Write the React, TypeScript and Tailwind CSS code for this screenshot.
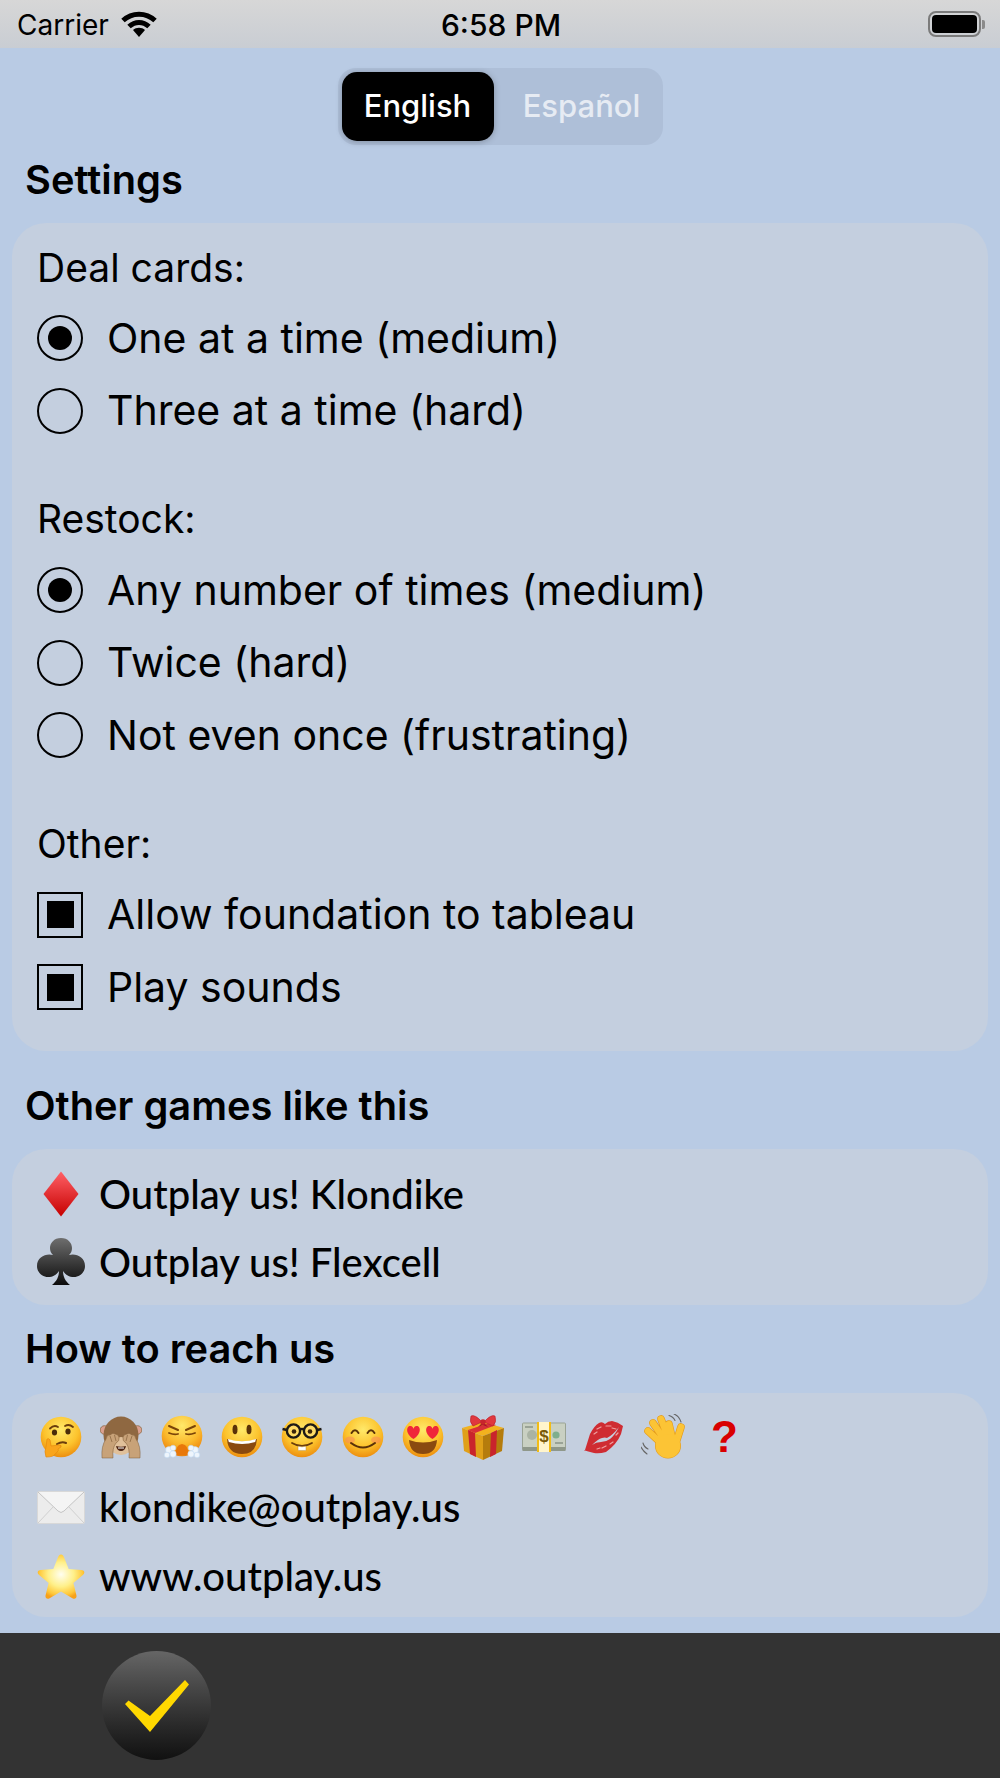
import React from "react";

const sf = "font-['Inter',sans-serif]";

function Face({ id, children }: { id: string; children?: React.ReactNode }) {
  return (
    <svg width="42" height="42" viewBox="0 0 42 42">
      <defs>
        <radialGradient id={id} cx="50%" cy="32%" r="70%">
          <stop offset="0%" stopColor="#ffe96a" />
          <stop offset="60%" stopColor="#fcc32d" />
          <stop offset="100%" stopColor="#ec8a0c" />
        </radialGradient>
      </defs>
      <circle cx="21" cy="21" r="20.3" fill={`url(#${id})`} />
      {children}
    </svg>
  );
}

const Thinking = () => (
  <Face id="f1">
    <path d="M10 12.5q4-4 8-1.5M25 10q4-2.500 8 1" stroke="#6b3d0c" strokeWidth="1.800" fill="none" strokeLinecap="round" />
    <ellipse cx="14.500" cy="16.500" rx="2.600" ry="3" fill="#4a2c0a" />
    <ellipse cx="28" cy="15.500" rx="2.600" ry="3" fill="#4a2c0a" />
    <path d="M17 28q5-3 9-1" stroke="#6b3d0c" strokeWidth="2" fill="none" strokeLinecap="round" />
    <path d="M6 41q-2-6 0-10l1-8q2-1 3 1l1 6 8-1q3 0 2 2l-3 2q1 2-1 3-1 2-2 2-1 3-9 3z" fill="#f9a51c" stroke="#e58a0f" strokeWidth=".7" />
  </Face>
);

const Monkey = () => (
  <svg width="42" height="44" viewBox="0 0 42 44">
    <circle cx="4.500" cy="15" r="4.300" fill="#dba08f" stroke="#8e6a44" strokeWidth=".8" />
    <circle cx="37.500" cy="15" r="4.300" fill="#dba08f" stroke="#8e6a44" strokeWidth=".8" />
    <ellipse cx="21" cy="20" rx="17.500" ry="18.500" fill="#8f6841" />
    <ellipse cx="21" cy="31" rx="11.500" ry="9" fill="#e0c09a" />
    <path d="M16 31q5 1.500 10 0-1 5-5 5t-5-5z" fill="#4c2414" />
    <path d="M18 32.500h6v1h-6z" fill="#fff" />
    <path d="M2 43q-1-12 4-19 1-5 4-4 3-3 5-1 3 0 4 3 1 4-3 6-4 5-3 15z" fill="#c8a278" stroke="#7d5a36" strokeWidth=".5" />
    <path d="M40 43q1-12-4-19-1-5-4-4-3-3-5-1-3 0-4 3-1 4 3 6 4 5 3 15z" fill="#c8a278" stroke="#7d5a36" strokeWidth=".5" />
    <path d="M10 21l2 6M14.500 20l1.500 6M32 21l-2 6M27.500 20l-1.500 6" stroke="#8e6a44" strokeWidth=".8" />
  </svg>
);

const Huff = () => (
  <svg width="42" height="44" viewBox="0 0 42 44">
    <defs>
      <radialGradient id="f3" cx="50%" cy="25%" r="75%">
        <stop offset="0%" stopColor="#ffe96a" />
        <stop offset="60%" stopColor="#fbb92c" />
        <stop offset="100%" stopColor="#ea7f0c" />
      </radialGradient>
    </defs>
    <circle cx="21" cy="21" r="20.300" fill="url(#f3)" />
    <path d="M8 11l9 4M34 11l-9 4" stroke="#7a4408" strokeWidth="2" strokeLinecap="round" />
    <path d="M8 18q5 2 9 1M34 18q-5 2-9 1" stroke="#7a4408" strokeWidth="1.800" fill="none" strokeLinecap="round" />
    <path d="M15 40q-1-10 6-11 7 1 6 11z" fill="#e8780a" />
    <g fill="#eef5fc" stroke="#b8d4f0" strokeWidth=".5">
      <circle cx="8" cy="35" r="3.400" /><circle cx="12" cy="33" r="2.800" /><circle cx="12" cy="39" r="3.200" /><circle cx="6" cy="40" r="2.800" />
      <circle cx="34" cy="35" r="3.400" /><circle cx="30" cy="33" r="2.800" /><circle cx="30" cy="39" r="3.200" /><circle cx="36" cy="40" r="2.800" />
    </g>
  </svg>
);

const Smiley = () => (
  <Face id="f4">
    <ellipse cx="14" cy="13.500" rx="2.500" ry="4.800" fill="#5a3208" />
    <ellipse cx="28" cy="13.500" rx="2.500" ry="4.800" fill="#5a3208" />
    <path d="M6 23q15 5 30 0-1 15-15 15T6 23z" fill="#8a4a10" />
    <path d="M7 23q14 4.500 28 0l-.8 3q-13 4-26.400 0z" fill="#fff" />
  </Face>
);

const Nerd = () => (
  <Face id="f5">
    <circle cx="12.500" cy="15" r="6.600" fill="#ffdc66" stroke="#1d1a16" strokeWidth="2.400" />
    <circle cx="29.500" cy="15" r="6.600" fill="#ffdc66" stroke="#1d1a16" strokeWidth="2.400" />
    <path d="M1.500 13l4.500 1M18.500 13.500q2.500-1 5 0M36 14l4.500-1" stroke="#1d1a16" strokeWidth="2.400" />
    <circle cx="13" cy="15.500" r="2.300" fill="#3a250c" />
    <circle cx="29" cy="15.500" r="2.300" fill="#3a250c" />
    <path d="M11 27q10 6 20 0" stroke="#6b3d0c" strokeWidth="1.800" fill="none" strokeLinecap="round" />
    <path d="M17 30.200l4 .6 4-.6v4q-1 1-2 0-1 1-2 0-1 1-2 0-1 1-2 0z" fill="#fff" stroke="#b58a3a" strokeWidth=".5" />
  </Face>
);

const Blush = () => (
  <Face id="f6">
    <ellipse cx="8" cy="24" rx="5" ry="3.500" fill="#f8885a" opacity=".55" />
    <ellipse cx="34" cy="24" rx="5" ry="3.500" fill="#f8885a" opacity=".55" />
    <path d="M9.500 17q3.500-5.500 7 0M25.500 17q3.500-5.500 7 0" stroke="#5a3208" strokeWidth="2" fill="none" strokeLinecap="round" />
    <path d="M9 27q12 9 24 0" stroke="#5a3208" strokeWidth="2" fill="none" strokeLinecap="round" />
  </Face>
);

const Heart = ({ x, y }: { x: number; y: number }) => (
  <path transform={`translate(${x} ${y})`} d="M0 9C-9 3-7-5-2.500-4-1-3.800 0-2 0-1 0-2 1-3.800 2.500-4 7-5 9 3 0 9z" fill="#f0263a" />
);

const HeartEyes = () => (
  <Face id="f7">
    <path d="M7 24q14 5 28 0-1 14-14 14T7 24z" fill="#8a4a10" />
    <Heart x={11.500} y={14} />
    <Heart x={30.500} y={14} />
  </Face>
);

const Gift = () => (
  <svg width="44" height="46" viewBox="0 0 44 46">
    <path d="M1 14L22 8l21 6-21 8z" fill="#f2b21e" />
    <path d="M1 14l21 8v24L3 37z" fill="#e0a018" />
    <path d="M43 14l-21 8v24l19-9z" fill="#b57c0c" />
    <path d="M7 16l7 3 1 24-6-3zM30 19l6-3-1 24-6 3z" fill="#c9242c" />
    <path d="M7 16L28 9l7 2-21 8z" fill="#d83038" />
    <path d="M21 8Q14 0 10 2 8 8 12 12zM23 8Q30 0 34 2 36 8 32 12z" fill="#e0383e" stroke="#b81f28" strokeWidth=".6" />
    <path d="M21 9l-4 4 5-2 5 2-4-4z" fill="#a01a22" />
    <circle cx="22" cy="8" r="2.800" fill="#c8242c" />
  </svg>
);

const Money = () => (
  <svg width="44" height="30" viewBox="0 0 44 30">
    <rect x="0.500" y="1" width="43" height="27" rx="1" fill="#c9d0c2" stroke="#9aa394" />
    <rect x="0.500" y="25" width="43" height="4" fill="#8f988a" />
    <circle cx="10" cy="13" r="5" fill="#aab3a4" />
    <circle cx="34" cy="13" r="3.600" fill="#7fae8d" />
    <rect x="3" y="4" width="8" height="2" fill="#9aa396" />
    <rect x="33" y="20" width="8" height="2" fill="#9aa396" />
    <rect x="15" y="0" width="14" height="30" fill="#fff5cc" />
    <rect x="15" y="0" width="2" height="30" fill="#f2bc16" />
    <rect x="27" y="0" width="2" height="30" fill="#f2bc16" />
    <text x="22" y="20" textAnchor="middle" fontSize="17" fontWeight="700" fill="#7a5a08" fontFamily="'Liberation Sans',sans-serif">$</text>
  </svg>
);

const Kiss = () => (
  <svg width="40" height="34" viewBox="0 0 40 34">
    <path d="M1 30L6 14Q10 6 15 3q3-2 6 1 3-3 7-3 6 1 11 5l-2 8q-4 10-15 18-7 2-12 1-5-1-11-3z" fill="#cf2c32" />
    <path d="M8 25q6-6 10-7 3-1 5 0 6-3 12-11-4 8-9 12-4 3-9 3-5 0-9 3z" fill="#c4cfdf" />
    <path d="M13 9l4-2M22 6l5 0M18 28l4-2M10 14l3-2M28 8l4 1M26 24l3-2M13 29l3-1M32 15l2-2" stroke="#f0a0a0" strokeWidth="1.200" strokeLinecap="round" />
  </svg>
);

const Wave = () => (
  <svg width="46" height="46" viewBox="0 0 46 46">
    <path d="M28 1.500q4 1 6 5M33 0q5 2 7 8M2 29q1 4 5 6M0 33q2 4 6 7" stroke="#666" strokeWidth="1.100" fill="none" strokeLinecap="round" />
    <g stroke="#e39a1c" strokeLinecap="round" fill="none" strokeWidth="7.600">
      <path d="M21 30L7 17M23 25L12 9M27 23L20 5M31 23L28 10M34 32L40 13" />
    </g>
    <ellipse cx="27" cy="32" rx="13" ry="12.500" fill="#e39a1c" />
    <g stroke="#fcc435" strokeLinecap="round" fill="none" strokeWidth="6.400">
      <path d="M21 30L7 17M23 25L12 9M27 23L20 5M31 23L28 10M34 32L40 13" />
    </g>
    <ellipse cx="27" cy="32" rx="12.400" ry="12" fill="#fcc435" />
  </svg>
);

const Radio = ({ on }: { on?: boolean }) => (
  <span className="flex h-[46px] w-[46px] shrink-0 items-center justify-center rounded-full border-[2px] border-black">
    {on && <span className="h-[24px] w-[24px] rounded-full bg-black" />}
  </span>
);

const Check = () => (
  <span className="flex h-[46px] w-[46px] shrink-0 items-center justify-center border-[2px] border-black">
    <span className="h-[27px] w-[27px] bg-black" />
  </span>
);

const Row = ({ icon, children }: { icon: React.ReactNode; children: React.ReactNode }) => (
  <div className="flex h-[72.5px] items-center gap-[24px] text-[41px] text-black">
    {icon}
    <span>{children}</span>
  </div>
);

const Label = ({ children, className }: { children: React.ReactNode; className?: string }) => (
  <div className={`flex h-[46px] items-center text-[39px] text-black ${className ?? ""}`}>{children}</div>
);

const Heading = ({ children, className }: { children: React.ReactNode; className?: string }) => (
  <h2 className={`flex h-[44px] items-center pl-[25px] text-[39.8px] font-semibold text-black ${className ?? ""}`}>{children}</h2>
);

const LinkRow = ({ icon, h, children }: { icon: React.ReactNode; h: string; children: React.ReactNode }) => (
  <div className={`flex ${h} items-center text-black`}>
    <span className="flex w-[60px] shrink-0 justify-center">{icon}</span>
    <span className="ml-[8px] font-['Lato',sans-serif] text-[40px] font-medium">{children}</span>
  </div>
);

const emojis = [Thinking, Monkey, Huff, Smiley, Nerd, Blush, HeartEyes, Gift, Money, Kiss, Wave];

export default function App() {
  return (
    <div className={`flex h-[1778px] w-[1000px] flex-col overflow-hidden bg-[#b9cbe4] ${sf}`}>
      <div className="flex h-[48px] shrink-0 items-center justify-between bg-gradient-to-b from-[#d7d7d7] to-[#c9cdd3] pl-[17px] pr-[15px] text-[28px] text-black">
        <div className="flex w-[200px] items-center gap-[12px] pt-[1px]">
          <span>Carrier</span>
          <svg className="-mt-[3px]" width="36" height="27" viewBox="0 0 36 27">
            <path d="M2 10.500C11 2 25 2 34 10.500" stroke="#000" strokeWidth="5" fill="none" />
            <path d="M8 16.500C14 11 22 11 28 16.500" stroke="#000" strokeWidth="5" fill="none" />
            <path d="M18 27l-6-7c3.200-3 8.800-3 12 0z" fill="#000" />
          </svg>
        </div>
        <span className="pt-[2px] text-[30px] font-medium">6:58 PM</span>
        <div className="flex w-[200px] items-center justify-end">
          <span className="flex h-[26px] w-[53px] items-center justify-center rounded-[8px] border-[2px] border-[#7b7b7b]">
            <span className="h-[18px] w-[45px] rounded-[4px] bg-black" />
          </span>
          <span className="ml-[1px] h-[9px] w-[3px] rounded-r-[2px] bg-[#8a8a8a]" />
        </div>
      </div>

      <div className="mt-[20px] flex h-[77px] w-[325px] shrink-0 self-center rounded-[18px] bg-[#aebfd8] p-[4px] text-[31px] font-medium">
        <div className="flex w-[152px] items-center justify-center rounded-[15px] bg-black text-white shadow-[0_1px_6px_rgba(0,0,0,0.25)]">English</div>
        <div className="flex flex-1 items-center justify-center pl-[11px] text-[#e6ebf3]">Español</div>
      </div>

      <Heading className="mt-[13px]">Settings</Heading>

      <section className="mx-[12px] mt-[21px] h-[828px] shrink-0 rounded-[34px] bg-[#c4cfdf] px-[25px] pt-[22px]">
        <Label>Deal cards:</Label>
        <div className="mt-[11px]">
          <Row icon={<Radio on />}>One at a time (medium)</Row>
          <Row icon={<Radio />}>Three at a time (hard)</Row>
        </div>
        <Label className="mt-[49px]">Restock:</Label>
        <div className="mt-[12px]">
          <Row icon={<Radio on />}>Any number of times (medium)</Row>
          <Row icon={<Radio />}>Twice (hard)</Row>
          <Row icon={<Radio />}>Not even once (frustrating)</Row>
        </div>
        <Label className="mt-[50px]">Other:</Label>
        <div className="mt-[11px]">
          <Row icon={<Check />}>Allow foundation to tableau</Row>
          <Row icon={<Check />}>Play sounds</Row>
        </div>
      </section>

      <Heading className="mt-[33px]">Other games like this</Heading>

      <section className="mx-[12px] mt-[21px] h-[156px] shrink-0 rounded-[34px] bg-[#c4cfdf] pl-[19px] pt-[11px]">
        <LinkRow
          h="h-[68px]"
          icon={
            <svg width="36" height="46" viewBox="0 0 36 46">
              <defs>
                <linearGradient id="dia" x1="0" y1="0" x2="0" y2="1">
                  <stop offset="0%" stopColor="#ff6066" />
                  <stop offset="100%" stopColor="#c60000" />
                </linearGradient>
              </defs>
              <path d="M18 0.500L35.500 23 18 45.500 0.500 23z" fill="url(#dia)" />
            </svg>
          }
        >
          Outplay us! Klondike
        </LinkRow>
        <LinkRow
          h="h-[68px]"
          icon={
            <svg width="48" height="48" viewBox="0 0 48 48">
              <defs>
                <linearGradient id="club" x1="0" y1="0" x2="0" y2="1">
                  <stop offset="0%" stopColor="#6e6e6e" />
                  <stop offset="100%" stopColor="#0c0c0c" />
                </linearGradient>
              </defs>
              <path d="M24 0c7 0 11 5 11 10 0 3-1 5-3 7 7-2 16 2 16 11 0 7-6 11-11 11-5 0-8-2-11-6 0 5 2 10 7 14H15c5-4 7-9 7-14-3 4-6 6-11 6-5 0-11-4-11-11 0-9 9-13 16-11-2-2-3-4-3-7 0-5 4-10 11-10z" fill="url(#club)" />
            </svg>
          }
        >
          Outplay us! Flexcell
        </LinkRow>
      </section>

      <Heading className="mt-[22px]">How to reach us</Heading>

      <section className="mx-[12px] mt-[22px] h-[224px] shrink-0 rounded-[34px] bg-[#c4cfdf] pl-[19px] pt-[14px]">
        <div className="flex h-[60px] items-center">
          {emojis.map((E, i) => (
            <span key={i} className="flex w-[60.300px] shrink-0 justify-center">
              <E />
            </span>
          ))}
          <span className="flex w-[60.300px] justify-center font-['Liberation_Sans',sans-serif] text-[44px] font-bold leading-none text-[#d90000]">?</span>
        </div>
        <LinkRow
          h="h-[70px] mt-[5px]"
          icon={
            <svg width="48" height="33" viewBox="0 0 48 33">
              <rect x="0.500" y="0.500" width="47" height="32" rx="1.500" fill="#ececec" stroke="#d8d8d8" />
              <path d="M1 1l20 19q3 3 6 0L47 1" fill="#f4f4f4" stroke="#c4c4c4" />
              <path d="M1 32l16-17M47 32L31 15" stroke="#d0d0d0" fill="none" />
            </svg>
          }
        >
          klondike@outplay.us
        </LinkRow>
        <LinkRow
          h="h-[70px] -mt-[1px]"
          icon={
            <svg width="48" height="46" viewBox="0 0 48 46">
              <defs>
                <radialGradient id="star" cx="50%" cy="45%" r="55%">
                  <stop offset="0%" stopColor="#fffef0" />
                  <stop offset="50%" stopColor="#fff08a" />
                  <stop offset="85%" stopColor="#ffc83a" />
                  <stop offset="100%" stopColor="#f7a11a" />
                </radialGradient>
              </defs>
              <path d="M24 1.500c1.500 0 2.400 1.200 3 2.800l4.700 11.700 12.600.9c3.200.3 4 3 1.600 5l-9.500 8 3 12.300c.7 3-1.500 4.500-4 3L24 38.400l-11.400 6.800c-2.500 1.500-4.700 0-4-3l3-12.300-9.500-8c-2.400-2-1.600-4.700 1.600-5l12.600-.9L21 4.300c.6-1.600 1.500-2.800 3-2.800z" fill="url(#star)" />
            </svg>
          }
        >
          www.outplay.us
        </LinkRow>
      </section>

      <div className="mt-[16px] flex flex-1 items-center bg-[#333333] pl-[102px]">
        <button className="flex h-[109px] w-[109px] items-center justify-center rounded-full bg-gradient-to-b from-[#666666] to-[#111111]">
          <svg width="64" height="52" viewBox="0 0 64 52">
            <path d="M0 24L3.500 20.500 25 36 60 0l4 4.500L25 52z" fill="#ffd800" />
          </svg>
        </button>
      </div>
    </div>
  );
}
